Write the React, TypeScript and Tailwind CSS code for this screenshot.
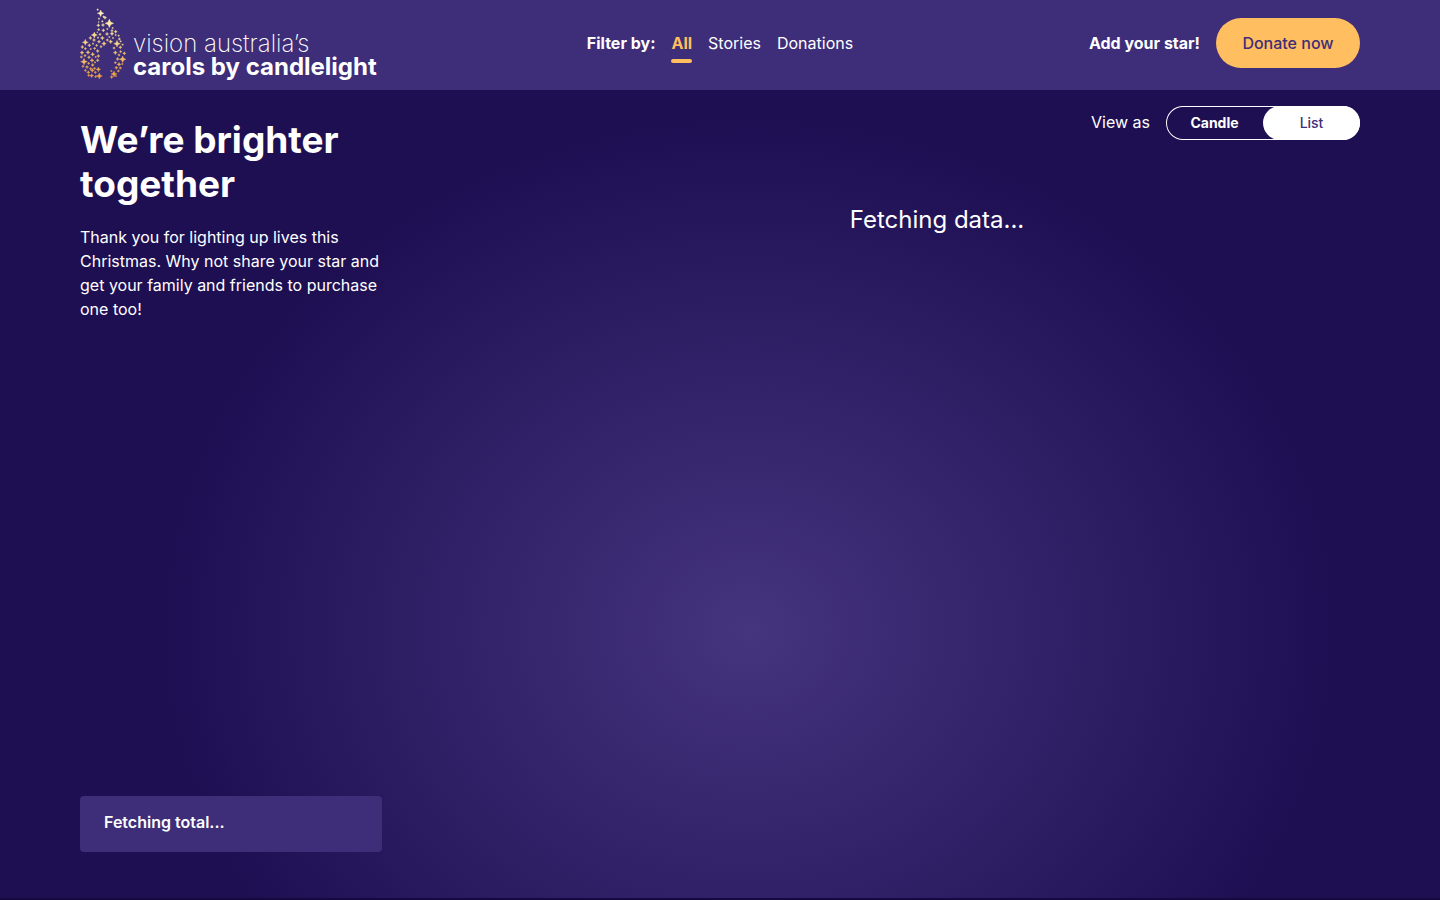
type Star = [x: number, y: number, r: number];

const stars: Star[] = [
  [83, 29, 3], [92, 40, 10], [101, 50, 3], [105, 53, 5], [118, 70, 13], [87, 56, 3],
  [85, 76, 5], [99, 75, 5], [97, 64, 3], [86, 66, 2], [128, 84, 3], [126, 92, 4],
  [86, 89, 4], [100, 91, 5], [112, 87, 3], [73, 105, 9], [90, 103, 4], [82, 97, 2],
  [111, 102, 5], [126, 101, 6], [137, 95, 5], [137, 105, 3], [97, 114, 6], [84, 113, 3],
  [118, 111, 3], [61, 114, 5], [146, 107, 3], [129, 114, 3], [148, 117, 4], [72, 120, 5],
  [46, 127, 9], [87, 125, 5], [102, 131, 7], [112, 120, 4], [122, 125, 6], [141, 131, 10],
  [152, 124, 3], [58, 136, 5], [69, 131, 3], [80, 136, 4], [93, 140, 4], [37, 141, 5],
  [46, 146, 4], [74, 145, 4], [62, 147, 3], [132, 144, 4], [151, 142, 5],
  [36, 158, 6], [54, 157, 6], [68, 163, 6], [83, 153, 5], [158, 134, 3], [136, 158, 6],
  [152, 155, 4], [163, 160, 5], [147, 165, 4], [45, 167, 4], [85, 168, 5], [34, 171, 4],
  [77, 171, 3], [57, 172, 5], [158, 178, 10], [143, 177, 5], [42, 185, 10], [66, 181, 6],
  [83, 181, 5], [75, 187, 3], [56, 190, 4], [136, 188, 4], [147, 193, 6], [157, 192, 3],
  [39, 199, 4], [51, 201, 5], [68, 195, 5], [62, 206, 4], [85, 208, 7], [74, 205, 4],
  [139, 203, 5], [151, 204, 4], [46, 211, 4], [67, 211, 6], [55, 217, 5], [76, 217, 4],
  [145, 213, 4], [132, 222, 9], [65, 227, 6], [88, 228, 9], [77, 230, 4], [56, 226, 4],
  [125, 231, 5], [138, 228, 3], [124, 213, 3],
];

function starPath([x, y, r]: Star) {
  const k = r * 0.3;
  return `M${x} ${y - r}L${x + k} ${y - k}L${x + r} ${y}L${x + k} ${y + k}L${x} ${y + r}L${x - k} ${y + k}L${x - r} ${y}L${x - k} ${y - k}Z`;
}

function Logo() {
  return (
    <a href="#" className="flex items-end gap-[7px] pb-0.5">
      <svg viewBox="30 24 138 216" className="h-[72px] w-[46px] shrink-0" aria-hidden="true">
        <defs>
          <linearGradient id="flame" gradientUnits="userSpaceOnUse" x1="0" y1="24" x2="0" y2="240">
            <stop offset="0" stopColor="#fff3c4" />
            <stop offset="0.25" stopColor="#fde7a0" />
            <stop offset="0.6" stopColor="#f6c877" />
            <stop offset="1" stopColor="#f09a38" />
          </linearGradient>
        </defs>
        <path fill="url(#flame)" stroke="url(#flame)" strokeWidth="1" d={stars.map(starPath).join("")} />
      </svg>
      <span className="flex flex-col whitespace-nowrap pb-0.5 text-2xl leading-[23px]">
        <span className="font-extralight">vision australia’s</span>
        <span className="font-bold">carols by candlelight</span>
      </span>
    </a>
  );
}

export default function App() {
  return (
    <div className="flex min-h-screen flex-col border-b-2 border-[#150a40] bg-[#1e0f53] bg-[radial-gradient(ellipse_584px_510px_at_52%_630px,#45347e_0%,#1e0f53_100%)] font-['Inter',sans-serif] text-base text-white">
      <header className="bg-[#3e2d78]">
        <div className="grid h-[90px] grid-cols-[1fr_auto_1fr] items-center px-20">
          <Logo />
          <nav aria-label="Filter" className="flex items-center gap-4 pb-1">
            <span className="font-bold">Filter by:</span>
            <button className="relative font-bold text-[#ffbe5f]">
              All
              <span className="absolute inset-x-0 top-7 h-1 rounded-full bg-[#ffbe5f]" />
            </button>
            <button>Stories</button>
            <button>Donations</button>
          </nav>
          <div className="flex items-center justify-end gap-4 pb-1">
            <span className="font-bold">Add your star!</span>
            <a href="#donate" className="flex h-[50px] w-36 items-center justify-center rounded-full bg-[#ffbe5f] font-medium text-[#3e2d78]">
              Donate now
            </a>
          </div>
        </div>
      </header>

      <main className="flex flex-1 px-20 pb-[46px]">
        <section className="flex w-[302px] shrink-0 flex-col justify-between pt-7">
          <div>
            <h1 className="text-[37px] leading-[44px] font-bold">We’re brighter together</h1>
            <p className="mt-[19px] leading-6">
              Thank you for lighting up lives this Christmas. Why not share your star and get your family and friends to purchase one too!
            </p>
          </div>
          <div className="flex h-14 items-center rounded bg-[#3e2d78] px-6 pb-1 font-semibold">
            Fetching total...
          </div>
        </section>

        <section className="flex flex-1 flex-col pt-4">
          <div className="flex items-center justify-end gap-4">
            <span className="pb-0.5">View as</span>
            <div className="flex h-[34px] w-[194px] rounded-full text-sm inset-ring inset-ring-white">
              <button className="flex-1 font-bold">Candle</button>
              <button className="flex-1 rounded-full bg-white font-medium text-[#3e2d78]">List</button>
            </div>
          </div>
          <p className="mt-16 pl-[132px] text-center text-2xl leading-8">Fetching data...</p>
        </section>
      </main>
    </div>
  );
}
